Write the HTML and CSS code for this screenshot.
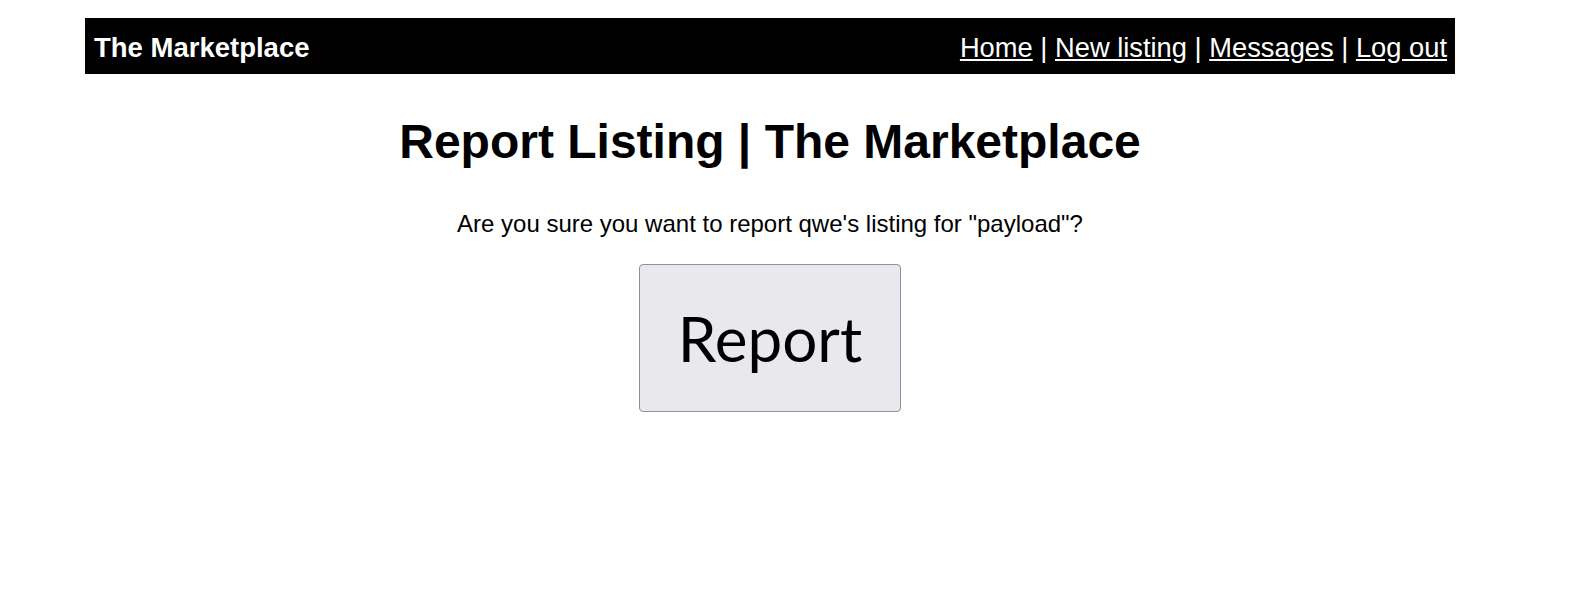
FILE: index.html
```html
<!DOCTYPE html>
<html lang="en">
<head>
<meta charset="utf-8">
<title>Report Listing | The Marketplace</title>
<link rel="stylesheet" href="styles.css">
</head>
<body>
<div class="page">
  <header class="navbar">
    <span class="brand">The Marketplace</span>
    <nav class="links">
      <a href="#">Home</a> | <a href="#">New listing</a> | <a href="#">Messages</a> | <a href="#">Log out</a>
    </nav>
  </header>
  <main class="content">
    <h1 class="title">Report Listing | The Marketplace</h1>
    <p class="question">Are you sure you want to report qwe's listing for "payload"?</p>
    <form class="report-form">
      <button type="button" class="report-btn">Report</button>
    </form>
  </main>
</div>
</body>
</html>
```

FILE: styles.css
```css
html, body {
  margin: 0;
  padding: 0;
  background: #fff;
}
body {
  font-family: "Liberation Sans", Arial, sans-serif;
  color: #000;
}
.page {
  width: 1370px;
  margin-left: 85px;
  padding-top: 18px;
}
.navbar {
  background: #000;
  color: #fff;
  height: 56px;
  box-sizing: border-box;
  display: flex;
  align-items: center;
  justify-content: space-between;
  padding: 4px 8px 0 9px;
}
.brand {
  font-weight: bold;
  font-size: 27.5px;
}
.links {
  font-size: 27.3px;
}
.links a {
  color: #fff;
  text-decoration: underline;
}
.content {
  display: flex;
  flex-direction: column;
  align-items: center;
}
.title {
  font-size: 48px;
  font-weight: bold;
  line-height: 56px;
  margin: 40px 0 0 0;
}
.question {
  font-size: 24px;
  line-height: 28px;
  margin: 40px 0 0 0;
}
.report-form {
  margin-top: 26px;
}
.report-btn {
  font-family: Lato, "Open Sans", sans-serif;
  font-size: 62px;
  line-height: 74px;
  color: #000;
  background: #e9e9ed;
  border: 1px solid #8f8f9d;
  border-radius: 4px;
  padding: 36px 38px;
}
```
